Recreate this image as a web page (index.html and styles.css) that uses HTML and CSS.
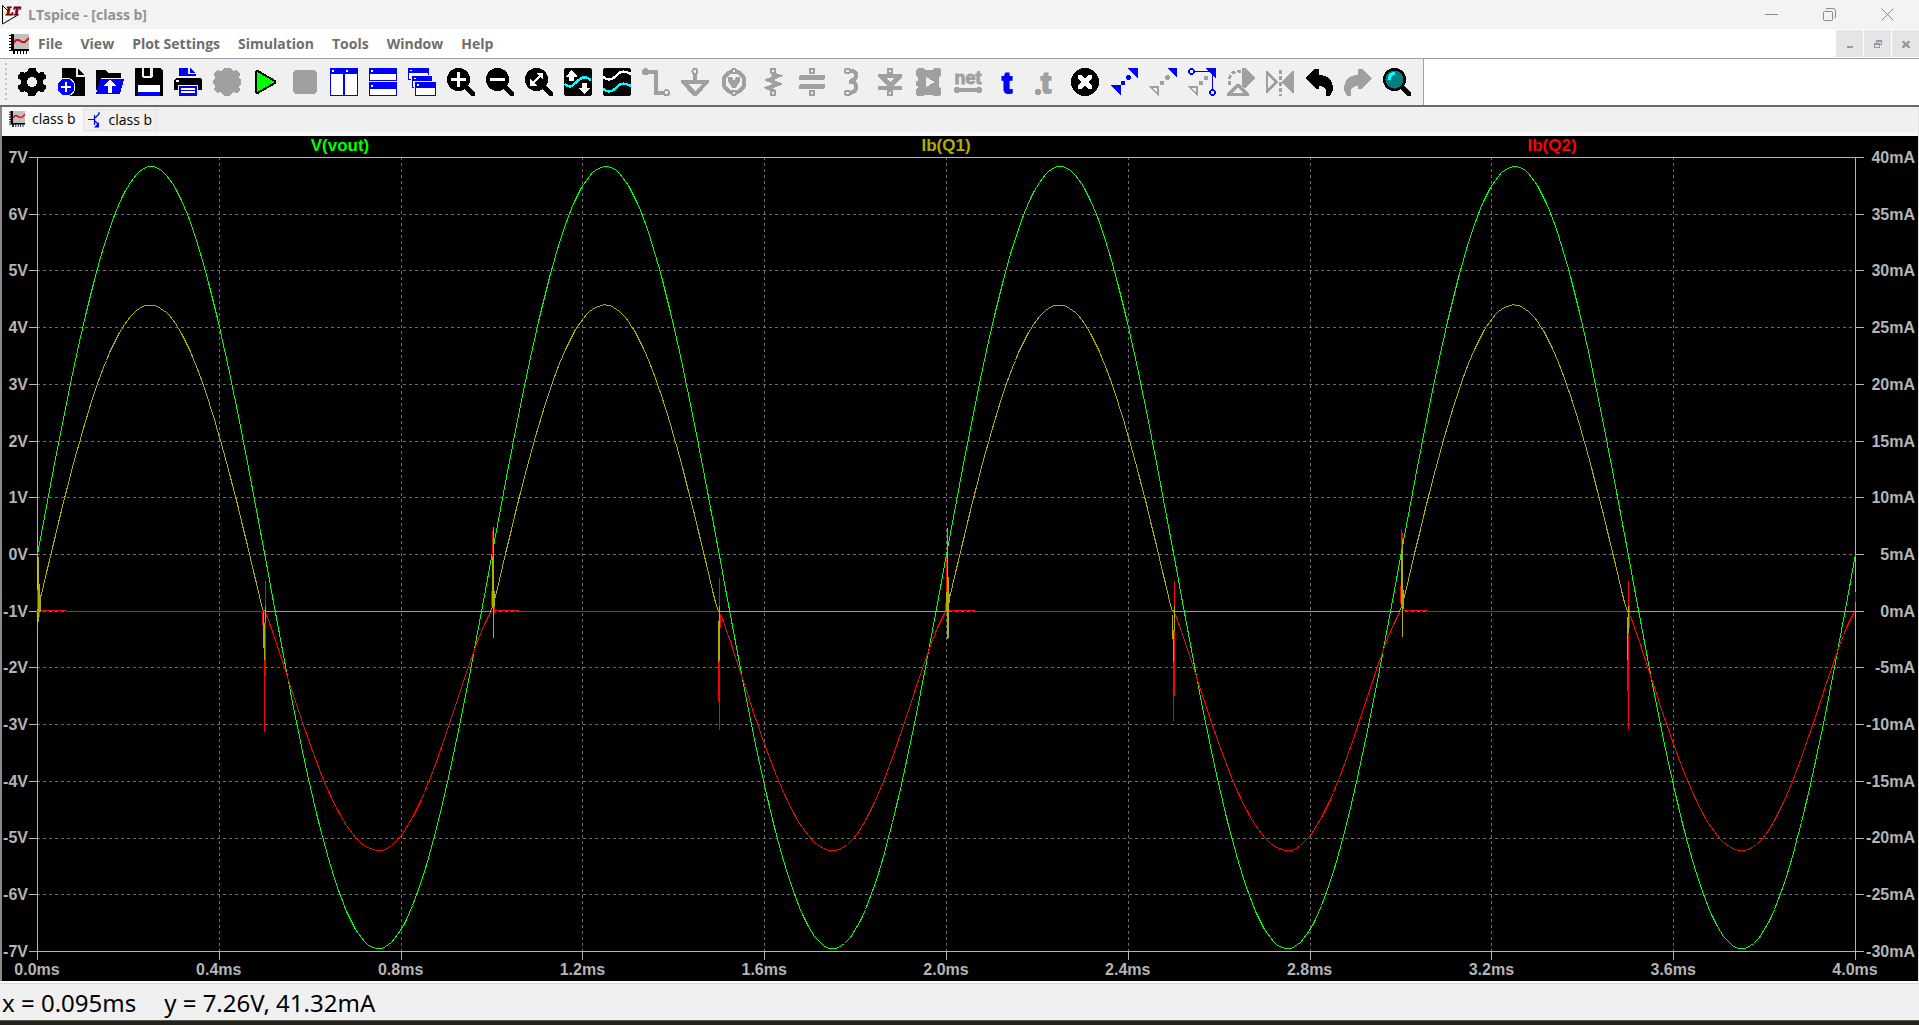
FILE: index.html
```html
<!DOCTYPE html>
<html lang="en">
<head>
<meta charset="utf-8">
<title>LTspice - [class b]</title>
<link rel="stylesheet" href="styles.css">
</head>
<body>
<svg class="defs" aria-hidden="true">
  <symbol id="plot-icon" viewBox="0 0 20 20">
    <path fill="#c0c0c0" d="M4 0h16v16H4z"/>
    <path fill="#000" d="M2 0h3v16H2zM4 15h16v2H4zM0 1h3v1H0zM0 4h3v1H0zM0 7h3v1H0zM0 10h3v1H0zM0 13h3v1H0zM0 16h5v1H0zM4 16h2v4H4zM8 16h1v4H8zM11 16h1v4h-1zM14 16h1v4h-1zM17 16h1v4h-1z"/>
    <path fill="none" stroke="#f00" stroke-width="1.8" d="M5 9l2-3h3l3 2h3l4-4"/>
  </symbol>
  <symbol id="lens" viewBox="0 0 28 28">
    <circle cx="11.5" cy="11.5" r="11.5"/>
    <path d="M18 18l8 8" stroke="#000" stroke-width="4.5" stroke-linecap="round"/>
  </symbol>
</svg>

<header class="titlebar">
  <svg class="logo" viewBox="0 0 20 20" aria-hidden="true">
    <path d="M.5 .5V19L15 10.500V8M.5 .5L6 6" fill="none" stroke="#000"/>
    <text x="4" y="10" class="logo-text">LT</text>
  </svg>
  <h1 class="title">LTspice - [class b]</h1>
  <div class="window-buttons">
    <button type="button" aria-label="Minimize"><svg viewBox="0 0 13 13"><path d="M0 6.500h13"/></svg></button>
    <button type="button" aria-label="Restore"><svg viewBox="0 0 13 13"><rect x=".5" y="3.500" width="9" height="9" rx="1"/><path d="M3 1.500q0-1 1-1h6q2.500 0 2.500 2.500v6q0 1-1 1"/></svg></button>
    <button type="button" aria-label="Close"><svg viewBox="0 0 13 13"><path d="M.5 .5l12 12M12.500 .5l-12 12"/></svg></button>
  </div>
</header>

<nav class="menubar">
  <svg class="menu-icon" aria-hidden="true"><use href="#plot-icon"/></svg>
  <div class="menus">
    <button type="button">File</button>
    <button type="button">View</button>
    <button type="button">Plot Settings</button>
    <button type="button">Simulation</button>
    <button type="button">Tools</button>
    <button type="button">Window</button>
    <button type="button">Help</button>
  </div>
  <div class="child-buttons">
    <button type="button" aria-label="Minimize plot"><svg viewBox="0 0 8 8"><path d="M1 6h6v2H1z"/></svg></button>
    <button type="button" aria-label="Restore plot"><svg viewBox="0 0 8 8"><path d="M2 0h6v5H6V4h1V2H3v1H2zM0 3h6v5H0zm1 2v2h4V5z" fill-rule="evenodd"/></svg></button>
    <button type="button" aria-label="Close plot"><svg viewBox="0 0 8 8"><path d="M0 1h2l2 2 2-2h2v1L6 4l2 3v1H6L4 6 2 8H0V7l2-3-2-2z"/></svg></button>
  </div>
</nav>

<div class="toolbar" role="toolbar">
  <div class="tools">
    <span class="grip"></span>
    <button type="button" aria-label="Settings"><svg viewBox="0 0 28 28"><circle cx="14" cy="14" r="11.500"/><rect x="10" y="0" width="8" height="28" rx="2"/><rect x="10" y="-1" width="8" height="30" rx="2" transform="rotate(60 14 14)"/><rect x="10" y="-1" width="8" height="30" rx="2" transform="rotate(120 14 14)"/><circle cx="14" cy="14" r="5" fill="#f0f0f0"/></svg></button>
    <button type="button" aria-label="New schematic"><svg viewBox="0 0 28 28"><path d="M5 0h14v9h9v19H5z"/><path d="M21 1l7 6h-7z"/><circle cx="9" cy="19" r="9.500" fill="#f0f0f0"/><circle cx="9" cy="19" r="8.500" fill="#00f"/><path d="M9 14v10M4 19h10" stroke="#fff" stroke-width="2.500"/></svg></button>
    <button type="button" aria-label="Open"><svg viewBox="0 0 28 28"><path d="M0 2h10l2 3h13v5H5L2 22H0z"/><path d="M4 11h24l-4 15H0z" fill="#00f"/><path d="M14 11l6 7h-4v7h-4v-7H8z" fill="#fff"/></svg></button>
    <button type="button" aria-label="Save"><svg viewBox="0 0 28 28"><path d="M0 0h25l3 3v25H0z"/><path d="M7 0h2v8h6V0h3v9h-1v1H8V9H7z" fill="#f0f0f0"/><path d="M9 0h3v8H9z"/><path d="M3 17h22v7H3z" fill="#fff"/><path d="M3 24h22v4H3z" fill="#00f"/></svg></button>
    <button type="button" aria-label="Print"><svg viewBox="0 0 28 28"><path d="M5 8V0h9v6h8v2z" fill="#00f"/><path d="M16 0l6 5h-6z" fill="#00f"/><path d="M0 12l2-2h24l2 2v10H0z"/><circle cx="3.500" cy="13" r="1.500" fill="#fff"/><path d="M4 17h20v11H4z" fill="#f0f0f0"/><path d="M5 18h18v10H5z" fill="#00f"/><path d="M7 21h14M7 24h14" stroke="#fff" stroke-width="1.500"/></svg></button>
    <button type="button" disabled aria-label="Edit simulation"><svg viewBox="0 0 28 28"><path d="M8 3l3-3h6l3 3 4-1 3 4-1 4 2 2v4l-2 2 1 4-3 3-4-1-3 4h-6l-3-4-4 1-3-3 1-4-2-2v-4l2-2-1-4 3-4z"/></svg></button>
    <button type="button" aria-label="Run"><svg viewBox="0 0 28 28"><path d="M3.500 4.500v19q1 2 3 1L23 15q1-1 0-2L6.500 3.500q-2-1-3 1z" fill="#0f0" stroke="#000" stroke-width="2"/></svg></button>
    <button type="button" disabled aria-label="Stop"><svg viewBox="0 0 28 28"><rect x="2" y="2" width="24" height="24" rx="4"/></svg></button>
    <button type="button" aria-label="Tile vertically"><svg viewBox="0 0 28 28"><path d="M0 1h28v27H0z" fill="#00f"/><path d="M0 0h28v7H0z" fill="#00f"/><path d="M1 6h12v21H1zM15 6h12v21H15zM2 2h2v2H2zM16 2h2v2h-2z" fill="#fff"/></svg></button>
    <button type="button" aria-label="Tile horizontally"><svg viewBox="0 0 28 28"><path d="M0 0h28v13H0zM0 14h28v14H0z" fill="#00f"/><path d="M1 6h26v6H1zM1 21h26v6H1zM2 2h2v2H2zM2 17h2v2H2z" fill="#fff"/></svg></button>
    <button type="button" aria-label="Cascade"><svg viewBox="0 0 28 28"><path d="M0 0h21v12H0z" fill="#00f"/><path d="M1 5h19v6H1zM2 2h2v1H2z" fill="#fff"/><path d="M3 7h22v14H3z" fill="#f0f0f0"/><path d="M4 8h20v12H4z" fill="#00f"/><path d="M5 13h18v6H5zM6 10h2v1H6z" fill="#fff"/><path d="M6 13h22v15H6z" fill="#f0f0f0"/><path d="M7 14h21v14H7z" fill="#00f"/><path d="M8 20h19v7H8zM9 16h2v2H9z" fill="#fff"/></svg></button>
    <button type="button" aria-label="Zoom in"><svg viewBox="0 0 28 28"><use href="#lens"/><path d="M11.500 4v15M4 11.500h15" stroke="#fff" stroke-width="3"/></svg></button>
    <button type="button" aria-label="Zoom out"><svg viewBox="0 0 28 28"><use href="#lens"/><path d="M4 11.500h15" stroke="#fff" stroke-width="3"/></svg></button>
    <button type="button" aria-label="Zoom to fit"><svg viewBox="0 0 28 28"><use href="#lens"/><path d="M7 16l9-9" stroke="#fff" stroke-width="2.500"/><path d="M11 5h7v7zM5 11v7h7z" fill="#fff"/></svg></button>
    <button type="button" aria-label="Autorange"><svg viewBox="0 0 28 28"><rect width="28" height="28" rx="3"/><path d="M1 16q5 5 9 0l6-5q5-4 11 1" fill="none" stroke="#0ff" stroke-width="2.500"/><path d="M7.500 2l6 6.500H10V13H5V8.500H2zM20.500 26l6-6H23v-5h-5v5h-4z" fill="#fff"/></svg></button>
    <button type="button" aria-label="Add trace"><svg viewBox="0 0 28 28"><rect width="28" height="28" rx="3"/><path d="M0 9q6 5 12 0l4-4q5-3 12 1" fill="none" stroke="#fff" stroke-width="2.500"/><path d="M0 21q6 5 12 0l4-4q5-3 12 1" fill="none" stroke="#0ff" stroke-width="2.500"/></svg></button>
    <button type="button" disabled aria-label="Wire"><svg viewBox="0 0 28 28"><circle cx="3.500" cy="3.500" r="3.500"/><path d="M4 3.500h9.500v21H22" class="line"/><circle cx="24.500" cy="24.500" r="2.500" class="ring"/></svg></button>
    <button type="button" disabled aria-label="Ground"><svg viewBox="0 0 28 28"><circle cx="14" cy="3.500" r="2.500" class="ring"/><path d="M14 6v7" class="line"/><path d="M0 12h28v2L16 28h-4L0 14zm7 4l7 7 7-7z"/></svg></button>
    <button type="button" disabled aria-label="Voltage source"><svg viewBox="0 0 28 28"><circle cx="14" cy="14" r="10.500" class="line"/><path d="M8 9h4l2 4 2-4h4v4l-4 7h-4l-4-7z"/><circle cx="14" cy="3" r="2" class="ring"/><circle cx="14" cy="25" r="2" class="ring"/></svg></button>
    <button type="button" disabled aria-label="Resistor"><svg viewBox="0 0 28 28"><path d="M13 6l6 2-9 4 9 4-10 4 6 3" class="line"/><circle cx="14" cy="3" r="2.500" class="ring"/><circle cx="14" cy="25" r="2.500" class="ring"/></svg></button>
    <button type="button" disabled aria-label="Capacitor"><svg viewBox="0 0 28 28"><rect x="1" y="7" width="26" height="5" rx="2"/><rect x="1" y="16" width="26" height="5" rx="2"/><circle cx="14" cy="3" r="2.500" class="ring"/><circle cx="14" cy="25" r="2.500" class="ring"/></svg></button>
    <button type="button" disabled aria-label="Inductor"><svg viewBox="0 0 28 28"><path d="M13 3q6 0 6 4 0 5-6 6 6 1 6 6 0 5-6 6M12 14h5" class="line"/><circle cx="10.500" cy="3" r="2.500" class="ring"/><circle cx="10.500" cy="25" r="2.500" class="ring"/></svg></button>
    <button type="button" disabled aria-label="Diode"><svg viewBox="0 0 28 28"><path d="M2 6h24v3l-9 9h9v4H2v-4h9L2 9zm8 4l4 4 4-4z" fill-rule="evenodd"/><circle cx="14" cy="3" r="2.500" class="ring"/><circle cx="14" cy="25" r="2.500" class="ring"/></svg></button>
    <button type="button" disabled aria-label="Component"><svg viewBox="0 0 28 28"><path d="M1 2l2-2h5l2 2h7l2-2h5l2 2v5l-2 3v8l2 3v5l-2 2h-5l-2-1h-7l-2 1H3l-2-1v-5l2-3v-1H1v-5h2v-3L1 7z"/><path d="M11 9l9 5-9 5z" fill="#f0f0f0"/></svg></button>
    <button type="button" disabled aria-label="Net name"><svg viewBox="0 0 28 28"><text x="14" y="16" class="net-text">net</text><path d="M3 22h22" class="line"/><circle cx="3" cy="22" r="3"/><circle cx="25" cy="22" r="3"/></svg></button>
    <button type="button" aria-label="Text"><svg viewBox="0 0 28 28"><text x="14" y="25" class="t-text" fill="#00f" stroke="#00f">t</text></svg></button>
    <button type="button" disabled aria-label="SPICE directive"><svg viewBox="0 0 28 28"><text x="14" y="25" class="t-text" fill="#a0a0a0" stroke="#a0a0a0">t</text><circle cx="6" cy="24" r="3"/></svg></button>
    <button type="button" aria-label="Delete"><svg viewBox="0 0 28 28"><circle cx="14" cy="14" r="14"/><path d="M9 9l10 10M19 9L9 19" stroke="#fff" stroke-width="4.500" stroke-linecap="round"/></svg></button>
    <button type="button" aria-label="Duplicate"><svg viewBox="0 0 28 28" fill="#00f"><path d="M17 0h11v11zM0 17h11v11z"/><circle cx="13" cy="15" r="2.500"/><circle cx="18.500" cy="9.500" r="2.500"/></svg></button>
    <button type="button" aria-label="Move"><svg viewBox="0 0 28 28"><path d="M18 0h10v10z" fill="#00f"/><path d="M1.500 19H9v7.500z" fill="none" stroke="#a0a0a0" stroke-width="1.500"/><g fill="#a0a0a0"><circle cx="13" cy="15" r="2.500"/><circle cx="18.500" cy="9.500" r="2.500"/></g></svg></button>
    <button type="button" aria-label="Drag"><svg viewBox="0 0 28 28"><path d="M17 0h11v11z" fill="#00f"/><path d="M1.500 19H9v7.500z" fill="none" stroke="#a0a0a0" stroke-width="1.500"/><g fill="#a0a0a0"><circle cx="13" cy="15" r="2.500"/><circle cx="18" cy="10" r="2.500"/></g><g fill="none" stroke="#00f" stroke-width="1.800"><path d="M6 3.500h18.500V22"/><circle cx="3.500" cy="3.500" r="2.500"/><circle cx="24.500" cy="24.500" r="2.500"/></g></svg></button>
    <button type="button" disabled aria-label="Rotate"><svg viewBox="0 0 28 28"><path d="M15 0h3l10 10-10 10h-3zM0 26l9-10h4l9 10v2H0zm6-1h10l-5-6z" fill-rule="evenodd"/><path d="M3 17Q0 3 14 3" class="dots"/></svg></button>
    <button type="button" disabled aria-label="Mirror"><svg viewBox="0 0 28 28"><path d="M28 3v22h-2L16 14 26 3zM0 3h2l10 11L2 25H0zm2 4v14l6-7z" fill-rule="evenodd"/><path d="M14 2v26" class="dots"/></svg></button>
    <button type="button" aria-label="Undo"><svg viewBox="0 0 28 28"><path d="M0 10L10 1h4v6q14 0 14 15l-3 6h-4q2-10-7-10v3h-3z"/></svg></button>
    <button type="button" disabled aria-label="Redo"><svg viewBox="0 0 28 28"><path d="M28 10L18 1h-4v6Q0 7 0 22l3 6h4Q5 18 14 18v3h3z"/></svg></button>
    <button type="button" aria-label="Find"><svg viewBox="0 0 28 28"><use href="#lens"/><circle cx="11.500" cy="11.500" r="9" fill="#008080"/><path d="M6 12q0-6 6-7" fill="none" stroke="#0ff" stroke-width="3"/></svg></button>
  </div>
</div>

<main class="workspace">
  <div class="tabs" role="tablist">
    <button type="button" role="tab" aria-selected="true" class="tab active"><svg aria-hidden="true"><use href="#plot-icon"/></svg>class b</button>
    <button type="button" role="tab" aria-selected="false" class="tab"><svg viewBox="0 0 16 16" aria-hidden="true"><path d="M0 7.500h6M6.500 3v10M7 6l4-4V0M7 9l3 3" fill="none" stroke="#00f" stroke-width="1.200"/><path d="M11 10v5.500H6z" fill="#00f"/></svg>class b</button>
  </div>
  <section class="plot" aria-label="Waveforms">
    <div class="legend">
      <span class="vout">V(vout)</span><span class="q1">Ib(Q1)</span><span class="q2">Ib(Q2)</span>
    </div>
    <div class="axis volts">
      <span>7V</span><span>6V</span><span>5V</span><span>4V</span><span>3V</span><span>2V</span><span>1V</span><span>0V</span><span>-1V</span><span>-2V</span><span>-3V</span><span>-4V</span><span>-5V</span><span>-6V</span><span>-7V</span>
    </div>
    <div class="canvas">
      <svg id="chart">
        <path class="grid"/><path class="frame"/><path class="wave vout"/><path class="wave q2"/><path class="wave q1"/>
      </svg>
    </div>
    <div class="axis amps">
      <span>40mA</span><span>35mA</span><span>30mA</span><span>25mA</span><span>20mA</span><span>15mA</span><span>10mA</span><span>5mA</span><span>0mA</span><span>-5mA</span><span>-10mA</span><span>-15mA</span><span>-20mA</span><span>-25mA</span><span>-30mA</span>
    </div>
    <div class="axis time">
      <span>0.0ms</span><span>0.4ms</span><span>0.8ms</span><span>1.2ms</span><span>1.6ms</span><span>2.0ms</span><span>2.4ms</span><span>2.8ms</span><span>3.2ms</span><span>3.6ms</span><span>4.0ms</span>
    </div>
  </section>
</main>

<footer class="status"><span>x = 0.095ms</span><span>y = 7.26V, 41.32mA</span></footer>
<div class="desktop-edge"></div>
<script src="plot.js"></script>
</body>
</html>
```
FILE: styles.css
```css
* { box-sizing: border-box; }

body {
  margin: 0;
  height: 100vh;
  display: flex;
  flex-direction: column;
  overflow: hidden;
  background: #f0f0f0;
  font-family: "Open Sans", "Noto Sans", sans-serif;
}

button {
  display: flex;
  align-items: center;
  justify-content: center;
  margin: 0;
  padding: 0;
  border: 0;
  background: none;
  font: inherit;
  color: inherit;
}

.defs { position: absolute; width: 0; height: 0; }

/* Title bar */
.titlebar {
  flex: none;
  display: flex;
  align-items: center;
  height: 29px;
  padding: 0 3px 0 2px;
  background: #f3f3f3;
}
.logo { width: 20px; height: 20px; overflow: visible; }
.logo-text {
  font: italic bold 12px "Liberation Serif", serif;
  fill: #800000;
  stroke: #800000;
}
.title {
  flex: 1;
  margin: 0 6px;
  font-size: 14px;
  line-height: 20px;
  font-weight: 700;
  color: #929292;
}
.window-buttons { display: flex; }
.window-buttons button { width: 58px; height: 28px; }
.window-buttons svg {
  width: 13px;
  height: 13px;
  fill: none;
  stroke: #8a8a8a;
}

/* Menu bar */
.menubar {
  flex: none;
  display: flex;
  align-items: center;
  height: 30px;
  padding-left: 9px;
  background: #fff;
  border-bottom: 1px solid #a0a0a0;
}
.menu-icon { width: 20px; height: 20px; }
.menus {
  flex: 1;
  display: flex;
  gap: 18px;
  padding-left: 9px;
  font-size: 14px;
  line-height: 20px;
  font-weight: 700;
  color: #6d6d6d;
}
.child-buttons { display: flex; gap: 1px; }
.child-buttons button {
  width: 27px;
  height: 27px;
  background: #e5e5e5;
}
.child-buttons svg { width: 8px; height: 8px; fill: #8e9bab; }

/* Toolbar */
.toolbar {
  flex: none;
  height: 48px;
  background: #fff;
  border-bottom: 2px solid #696969;
}
.tools {
  display: flex;
  align-items: center;
  gap: 11px;
  width: max-content;
  height: 46px;
  padding: 0 12px 0 5px;
  background: #f0f0f0;
  border-right: 1px solid #a0a0a0;
}
.grip {
  width: 2px;
  height: 38px;
  background: repeating-linear-gradient(#c0c0c0 0 2px, transparent 2px 5px);
}
.tools button, .tools svg { width: 28px; height: 28px; }
.tools svg { overflow: visible; shape-rendering: crispEdges; }
.tools button:disabled svg { fill: #a0a0a0; }
.line { fill: none; stroke: #a0a0a0; stroke-width: 4px; }
.ring { fill: #f0f0f0; stroke: #a0a0a0; stroke-width: 2px; }
.dots { fill: none; stroke: #a0a0a0; stroke-width: 3px; stroke-dasharray: 4 2; }
.net-text {
  font: bold 18px "Liberation Sans", sans-serif;
  text-anchor: middle;
  stroke: #a0a0a0;
}
.t-text {
  font: bold 30px "Liberation Sans", sans-serif;
  text-anchor: middle;
  stroke-width: 2px;
}

/* Document tabs and plot */
.workspace {
  flex: 1;
  min-height: 0;
  display: flex;
  flex-direction: column;
  border-left: 2px solid #8a8a8a;
  border-right: 1px solid #e3e3e3;
}
.tabs {
  flex: none;
  display: flex;
  align-items: flex-start;
  height: 29px;
  border-bottom: 4px solid #f8f8f8;
}
.tab {
  gap: 5px;
  height: 22px;
  margin-top: 2px;
  padding: 0 4px 0 4px;
  border: 1px solid #e3e3e3;
  font-size: 14px;
  line-height: 18px;
  color: #000;
}
.tab.active {
  gap: 7px;
  height: 25px;
  margin-top: 0;
  padding: 0 7px 2px;
  border: 0;
  background: #f9f9f9;
}
.tab svg { width: 16px; height: 16px; }

.plot {
  flex: 1;
  min-height: 0;
  display: grid;
  grid-template: 21px minmax(0, 1fr) 30px / 35px minmax(0, 1fr) 63px;
  background: #000;
  color: #b4b4b4;
  font: bold 16px/18px "Liberation Sans", Arial, sans-serif;
}
.legend {
  grid-area: 1 / 2;
  display: grid;
  grid-template-columns: repeat(3, 1fr);
  text-align: center;
  font-size: 17px;
  line-height: 20px;
}
.legend .vout { color: #0f0; }
.legend .q1 { color: #afaf00; }
.legend .q2 { color: #f00; }

.axis { display: flex; justify-content: space-between; }
.volts, .amps {
  flex-direction: column;
  text-align: right;
  margin: -8px 0 -10px;
}
.volts { grid-area: 2 / 1; padding-right: 9px; }
.amps { grid-area: 2 / 3; padding-right: 3px; }
.volts span, .amps span { align-self: flex-end; white-space: nowrap; }
.time { grid-area: 3 / 2; margin: 0 -30px; padding-top: 10px; text-align: center; }
.time span { width: 60px; }

.canvas { grid-area: 2 / 2; min-height: 0; }
#chart {
  display: block;
  width: 100%;
  height: 100%;
  overflow: visible;
  fill: none;
  shape-rendering: crispEdges;
}
.grid { stroke: #6c6c6c; stroke-dasharray: 3 3; }
.frame { stroke: #b4b4b4; }
.wave.vout { stroke: #0f0; }
.wave.q1 { stroke: #afaf00; }
.wave.q2 { stroke: #f00; }

/* Status bar */
.status {
  flex: none;
  display: flex;
  gap: 28px;
  height: 39px;
  padding: 6px 2px 0;
  border-top: 2px solid #fff;
  box-shadow: inset 0 1px #d9d9d9;
  font-family: "Noto Sans", "Open Sans", sans-serif;
  font-size: 24px;
  line-height: 28px;
  color: #000;
}
.desktop-edge { flex: none; height: 5px; background: #26231b; border-top: 1px solid #55564f; }
```
FILE: plot.js
```javascript
// Transient result: 4 ms of a 1 kHz class B output stage.
const SPAN = 4;
const V_TOP = 7, V_RANGE = 14;
const I_TOP = 40, I_RANGE = 70;

// Crossover spikes: time in ms, then [pixel offset, from mA, to mA].
const Q1_SPIKES = {
  0: [[1, 4.8, -0.9], [2, 2.4, 0], [3, 1.5, 0]],
  0.5: [[-1, 0, -3.2], [0, -1, -4.3], [1, 0.5, -1]],
  1: [[0, 4.8, 0.5], [1, 7.5, -2.3], [2, 1.8, 0.4]],
  1.5: [[-1, -0.8, -4.4], [0, 0.5, -4.3]],
  2: [[0, 1.7, 0.2], [1, 7.4, -2.4], [2, 3.1, -2.3], [3, 1.6, 0.8]],
  2.5: [[-1, -0.3, -2.4], [0, -1.6, -4.4], [1, 0.5, -1.7]],
  3: [[0, 5.5, 0.6], [1, 6.4, -2.2], [2, 1.9, 0.2]],
  3.5: [[-1, -0.5, -4.3], [0, 0.5, -1.9]],
  4: [[0, 0.9, 0]]
};
const Q2_SPIKES = {
  0: [[0, 1.9, 0], [2, 0, -0.5]],
  0.5: [[-2, 0, -1.2], [0, -4.3, -10.6], [1, 2.7, -5.7]],
  1: [[-1, 1.8, 0.5], [0, 7.1, 4.8], [2, 0.4, -0.2]],
  1.5: [[-1, -4.3, -8], [0, 3, -10.4], [1, -0.2, -1.4]],
  2: [[-1, 0.8, 0], [0, 4.8, 1.7]],
  2.5: [[0, -4.4, -9.6], [1, 2.7, -7.4]],
  3: [[-1, 2.3, 0.8], [0, 7.3, 5.4], [1, 6.9, 6.3]],
  3.5: [[-1, -4.3, -7], [0, 2.7, -10.4], [1, 0.6, -1.4]],
  4: [[0, 1.7, 0]]
};

const volts = t => {
  const s = Math.sin(2 * Math.PI * t);
  return s > 0 ? 6.84 * s : 6.95 * s;
};
const baseQ1 = t => {
  const p = t % 1;
  return p < 0.496 ? 27 * Math.sin(Math.PI * p / 0.496) : 0;
};
const baseQ2 = t => {
  const p = t % 1;
  if (p < 0.5) return p < 0.06 ? 0.1 : 0;
  return -21.1 * Math.pow(Math.abs(Math.sin(2 * Math.PI * p)), p < 0.75 ? 1.1 : 1.28);
};

function draw() {
  const svg = document.getElementById('chart');
  const { width, height } = svg.getBoundingClientRect();
  const x = t => Math.round(t / SPAN * width) + 0.5;
  const yv = v => Math.round((V_TOP - v) / V_RANGE * height) + 0.5;
  const yi = i => Math.round((I_TOP - i) / I_RANGE * height) + 0.5;
  const set = (name, d) => svg.querySelector(name).setAttribute('d', d);

  let grid = '', frame = '';
  for (let i = 0; i <= 10; i++) {
    const px = x(i * 0.4);
    const edge = i === 0 || i === 10;
    if (!edge) grid += `M${px} 0V${height}`;
    frame += `M${px} ${edge ? 0 : height}V${height + 9}`;
  }
  for (let v = -7; v <= 7; v++) {
    const py = yv(v);
    if (Math.abs(v) === 7) {
      frame += `M-8 ${py}H${width + 9}`;
    } else {
      grid += `M0 ${py}H${width}`;
      frame += `M-8 ${py}H0M${width} ${py}H${width + 9}`;
    }
  }
  set('.grid', grid);
  set('.frame', frame);

  const curve = (fn, y) => {
    let d = '';
    for (let px = 0; px <= width; px += 3) {
      d += `${px ? 'L' : 'M'}${px + 0.5} ${y(fn(px / width * SPAN))}`;
    }
    return d;
  };
  const spikes = table => Object.entries(table).map(([t, list]) =>
    list.map(([dx, a, b]) => `M${x(+t) + dx} ${yi(a)}V${yi(b)}`).join('')).join('');

  set('.wave.vout', curve(volts, yv));
  set('.wave.q1', curve(baseQ1, yi) + spikes(Q1_SPIKES));
  set('.wave.q2', curve(baseQ2, yi) + spikes(Q2_SPIKES));
}

draw();
window.addEventListener('resize', draw);
```
